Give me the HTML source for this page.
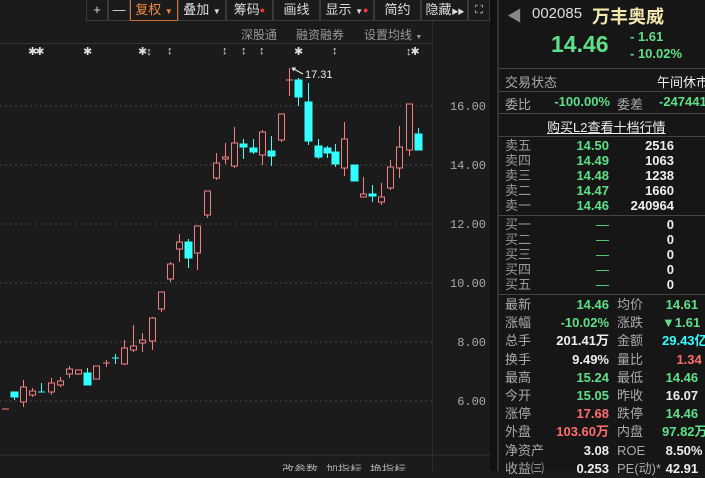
<!DOCTYPE html>
<html><head><meta charset="utf-8"><style>
*{margin:0;padding:0;box-sizing:border-box}
body{width:705px;height:471px;background:#1b1b1b;overflow:hidden;position:relative;font-family:"Liberation Sans","Noto Sans CJK SC",sans-serif;color:#ccc}
.a{position:absolute;white-space:nowrap}
.tb{position:absolute;top:0;height:21px;border:1px solid #3a3a3a;border-top:none;background:#1b1b1b;color:#ddd;font-size:13px;line-height:20px;text-align:center;white-space:nowrap;overflow:hidden}
.rp{position:absolute;left:497px;top:0;width:208px;height:471px;background:#161616;border-left:2px solid #333}
.l{position:absolute;font-size:13px;color:#aaa;left:6px}
.g{color:#5ee08a}.r{color:#ff6e6e}.w{color:#eee}.c{color:#3ff}
.v{position:absolute;font-size:13px;font-weight:bold;text-align:right}
.hl{position:absolute;left:0;width:208px;height:1px;background:#444}
</style></head><body>
<div class="a" style="left:0;top:43px;width:432px;height:1px;background:#333"></div>
<div class="a" style="left:432px;top:20px;width:1px;height:451px;background:#2e2e2e"></div>
<div class="a" style="left:490px;top:0;width:7px;height:471px;background:#111"></div>
<div class="tb" style="left:86px;width:22px">+</div>
<div class="tb" style="left:108px;width:22px">—</div>
<div class="tb" style="left:130px;width:48px;color:#f08a3c;border:1px solid #d07030;border-top:none">复权 <span style="font-size:8px">▼</span></div>
<div class="tb" style="left:178px;width:48px">叠加 <span style="font-size:8px">▼</span></div>
<div class="tb" style="left:226px;width:47px">筹码<span style="color:#f33;font-size:9px;vertical-align:top">●</span></div>
<div class="tb" style="left:273px;width:47px">画线</div>
<div class="tb" style="left:320px;width:54px">显示 <span style="font-size:8px">▼</span><span style="color:#f33;font-size:9px;vertical-align:top">●</span></div>
<div class="tb" style="left:374px;width:47px">简约</div>
<div class="tb" style="left:421px;width:47px">隐藏<span style="font-size:7px;letter-spacing:-1px">▶▶</span></div>
<div class="tb" style="left:468px;width:22px;font-size:11px">⛶</div>
<div class="a" style="left:241px;top:26px;font-size:12px;color:#999">深股通</div>
<div class="a" style="left:296px;top:26px;font-size:12px;color:#999">融资融券</div>
<div class="a" style="left:364px;top:26px;font-size:12px;color:#999">设置均线 <span style="font-size:7px">▼</span></div>
<div class="a" style="left:28px;top:45px;font-size:11px;color:#ddd;letter-spacing:-2px">✱✱</div>
<div class="a" style="left:83px;top:45px;font-size:11px;color:#ddd">✱</div>
<div class="a" style="left:138px;top:45px;font-size:11px;color:#ddd;letter-spacing:-1px">✱↕</div>
<div class="a" style="left:167px;top:45px;font-size:11px;color:#ddd">↕</div>
<div class="a" style="left:222px;top:45px;font-size:11px;color:#ddd">↕</div>
<div class="a" style="left:241px;top:45px;font-size:11px;color:#ddd">↕</div>
<div class="a" style="left:259px;top:45px;font-size:11px;color:#ddd">↕</div>
<div class="a" style="left:294px;top:45px;font-size:11px;color:#ddd">✱</div>
<div class="a" style="left:332px;top:45px;font-size:11px;color:#ddd">↕</div>
<div class="a" style="left:406px;top:45px;font-size:11px;color:#ddd;letter-spacing:-1px">↕✱</div>
<svg class="a" style="left:0;top:0" width="490" height="471">
<g stroke="#444" stroke-dasharray="2,3">
<line x1="0" y1="106" x2="432" y2="106"/><line x1="0" y1="165" x2="432" y2="165"/><line x1="0" y1="224" x2="432" y2="224"/><line x1="0" y1="283" x2="432" y2="283"/><line x1="0" y1="342" x2="432" y2="342"/><line x1="0" y1="401" x2="432" y2="401"/>
</g>
<line x1="0" y1="455" x2="490" y2="455" stroke="#333"/>
<g font-family="Liberation Mono,monospace" font-size="12" fill="#aaa" text-anchor="end">
<text x="486" y="110">16.00</text><text x="486" y="169">14.00</text><text x="486" y="228">12.00</text><text x="486" y="287">10.00</text><text x="486" y="346">8.00</text><text x="486" y="405">6.00</text></g>
<g stroke="#f08080" fill="#1b1b1b" stroke-width="1">
<line x1="2" y1="409" x2="9" y2="409"/>
<line x1="23.5" y1="380" x2="23.5" y2="407"/><rect x="20.5" y="387" width="6" height="15"/>
<line x1="32.5" y1="388" x2="32.5" y2="397"/><rect x="29.5" y="391" width="6" height="4"/>
<line x1="51.5" y1="378" x2="51.5" y2="395"/><rect x="48.5" y="383" width="6" height="9"/>
<line x1="60.5" y1="377" x2="60.5" y2="387"/><rect x="57.5" y="381" width="6" height="4"/>
<line x1="69.5" y1="366" x2="69.5" y2="378"/><rect x="66.5" y="369" width="6" height="5"/>
<line x1="78.5" y1="370" x2="78.5" y2="375"/><rect x="75.5" y="370" width="6" height="4"/>
<rect x="93.5" y="366" width="6" height="13"/>
<line x1="106.5" y1="360" x2="106.5" y2="367"/><line x1="103" y1="363" x2="110" y2="363"/>
<line x1="124.5" y1="340" x2="124.5" y2="365"/><rect x="121.5" y="348" width="6" height="16"/>
<line x1="133.5" y1="325" x2="133.5" y2="352"/><rect x="130.5" y="346" width="6" height="4"/>
<line x1="142.5" y1="333" x2="142.5" y2="352"/><rect x="139.5" y="340" width="6" height="3"/>
<line x1="152.5" y1="317" x2="152.5" y2="350"/><rect x="149.5" y="318" width="6" height="23"/>
<line x1="161.5" y1="292" x2="161.5" y2="312"/><rect x="158.5" y="292" width="6" height="17"/>
<line x1="170.5" y1="262" x2="170.5" y2="282"/><rect x="167.5" y="264" width="6" height="15"/>
<line x1="179.5" y1="234" x2="179.5" y2="262"/><rect x="176.5" y="242" width="6" height="7"/>
<line x1="197.5" y1="226" x2="197.5" y2="270"/><rect x="194.5" y="226" width="6" height="27"/>
<line x1="207.5" y1="191" x2="207.5" y2="218"/><rect x="204.5" y="191" width="6" height="24"/>
<line x1="216.5" y1="153" x2="216.5" y2="180"/><rect x="213.5" y="163" width="6" height="15"/>
<line x1="225.5" y1="143" x2="225.5" y2="164"/><rect x="222.5" y="157" width="6" height="2"/>
<line x1="234.5" y1="127" x2="234.5" y2="168"/><rect x="231.5" y="143" width="6" height="23"/>
<line x1="262.5" y1="130" x2="262.5" y2="165"/><rect x="259.5" y="132" width="6" height="23"/>
<line x1="281.5" y1="114" x2="281.5" y2="142"/><rect x="278.5" y="114" width="6" height="26"/>
<line x1="289.5" y1="68" x2="289.5" y2="96"/><line x1="286" y1="80" x2="293" y2="80"/>
<line x1="344.5" y1="122" x2="344.5" y2="176"/><rect x="341.5" y="139" width="6" height="29"/>
<line x1="363.5" y1="177" x2="363.5" y2="197"/><rect x="360.5" y="194" width="6" height="3"/>
<line x1="381.5" y1="183" x2="381.5" y2="205"/><rect x="378.5" y="197" width="6" height="5"/>
<line x1="390.5" y1="160" x2="390.5" y2="190"/><rect x="387.5" y="167" width="6" height="21"/>
<line x1="399.5" y1="126" x2="399.5" y2="178"/><rect x="396.5" y="147" width="6" height="21"/>
<line x1="409.5" y1="104" x2="409.5" y2="156"/><rect x="406.5" y="104" width="6" height="46"/>
</g>
<g stroke="#3ff" fill="#3ff">
<line x1="14.5" y1="392" x2="14.5" y2="400"/><rect x="11" y="392" width="7" height="5"/>
<line x1="41.5" y1="383" x2="41.5" y2="392"/><line x1="38" y1="392" x2="45" y2="392"/>
<line x1="87.5" y1="368" x2="87.5" y2="385"/><rect x="84" y="373" width="7" height="12"/>
<line x1="115.5" y1="354" x2="115.5" y2="364"/><line x1="112" y1="358" x2="119" y2="358"/>
<line x1="188.5" y1="239" x2="188.5" y2="268"/><rect x="185" y="242" width="7" height="16"/>
<line x1="243.5" y1="139" x2="243.5" y2="159"/><rect x="240" y="144" width="7" height="3"/>
<line x1="253.5" y1="139" x2="253.5" y2="154"/><rect x="250" y="148" width="7" height="4"/>
<line x1="271.5" y1="136" x2="271.5" y2="166"/><rect x="268" y="151" width="7" height="5"/>
<line x1="298.5" y1="78" x2="298.5" y2="106"/><rect x="295" y="80" width="7" height="17"/>
<line x1="308.5" y1="83" x2="308.5" y2="145"/><rect x="305" y="102" width="7" height="39"/>
<line x1="318.5" y1="139" x2="318.5" y2="159"/><rect x="315" y="146" width="7" height="11"/>
<line x1="327.5" y1="146" x2="327.5" y2="158"/><rect x="324" y="148" width="7" height="5"/>
<line x1="335.5" y1="144" x2="335.5" y2="167"/><rect x="332" y="152" width="7" height="12"/>
<rect x="351" y="165" width="7" height="16"/>
<line x1="372.5" y1="185" x2="372.5" y2="202"/><rect x="369" y="194" width="7" height="2"/>
<line x1="418.5" y1="128" x2="418.5" y2="150"/><rect x="415" y="134" width="7" height="16"/>
</g>
<path d="M292 68 L303 74 M292 68 l4 0 M292 68 l2 3" stroke="#eee" fill="none"/>
<text x="305" y="78" font-size="11" fill="#eee" font-family="Liberation Sans,sans-serif">17.31</text>
<g font-size="12" fill="#aaa" font-family="Liberation Sans,Noto Sans CJK SC,sans-serif"><text x="282" y="474">改参数</text><text x="326" y="474">加指标</text><text x="370" y="474">换指标</text></g>
</svg>
<div class="rp">
<div class="a" style="left:8px;top:5px;font-size:15px;color:#888">◀</div>
<div class="a" style="left:33px;top:5px;font-size:15px;color:#ddd">002085</div>
<div class="a" style="left:93px;top:3px;font-size:18px;font-weight:bold;color:#f4e8b0">万丰奥威</div>
<div class="a g" style="left:52px;top:31px;font-size:23px;font-weight:bold">14.46</div>
<div class="a g" style="left:131px;top:29px;font-size:13px;font-weight:bold">- 1.61</div>
<div class="a g" style="left:131px;top:46px;font-size:13px;font-weight:bold">- 10.02%</div>
<div class="hl" style="top:68px"></div>
<div class="l" style="top:72px">交易状态</div><div class="a w" style="left:158px;top:72px;font-size:13px">午间休市</div>
<div class="hl" style="top:91px"></div>
<div class="l" style="top:94px">委比</div><div class="v g" style="left:40px;width:71px;top:94px">-100.00%</div>
<div class="a" style="left:118px;top:94px;font-size:13px;color:#aaa">委差</div><div class="a g" style="left:160px;top:94px;font-size:13px;font-weight:bold">-247441</div>
<div class="hl" style="top:113px"></div>
<div class="a w" style="left:48px;top:117px;font-size:13px;text-decoration:underline">购买L2查看十档行情</div>
<div class="hl" style="top:136px"></div>
<div style="position:absolute;top:138px;left:0;width:208px;line-height:15px;font-size:13px">
<div class="l" style="position:static;padding-left:6px;color:#999">卖五<br>卖四<br>卖三<br>卖二<br>卖一</div>
<div class="v g" style="top:0;left:40px;width:70px;line-height:15px">14.50<br>14.49<br>14.48<br>14.47<br>14.46</div>
<div class="v w" style="top:0;left:110px;width:65px;line-height:15px">2516<br>1063<br>1238<br>1660<br>240964</div>
</div>
<div class="hl" style="top:215px"></div>
<div style="position:absolute;top:217px;left:0;width:208px;line-height:15px;font-size:13px">
<div class="l" style="position:static;padding-left:6px;color:#999">买一<br>买二<br>买三<br>买四<br>买五</div>
<div class="v g" style="top:0;left:40px;width:70px;line-height:15px;font-weight:normal">—<br>—<br>—<br>—<br>—</div>
<div class="v w" style="top:0;left:110px;width:65px;line-height:15px">0<br>0<br>0<br>0<br>0</div>
</div>
<div class="hl" style="top:294px"></div>
<div style="position:absolute;top:296px;left:0;width:230px;line-height:18.2px;font-size:13px">
<div class="l" style="position:static;padding-left:6px">最新<br>涨幅<br>总手<br>换手<br>最高<br>今开<br>涨停<br>外盘<br>净资产<br>收益㈢</div>
<div class="v" style="top:0;left:30px;width:80px;line-height:18.2px"><span class="g">14.46</span><br><span class="g">-10.02%</span><br><span class="w">201.41万</span><br><span class="w">9.49%</span><br><span class="g">15.24</span><br><span class="g">15.05</span><br><span class="r">17.68</span><br><span class="r">103.60万</span><br><span class="w">3.08</span><br><span class="w">0.253</span></div>
<div class="a" style="top:0;left:118px;line-height:18.2px;color:#aaa">均价<br>涨跌<br>金额<br>量比<br>最低<br>昨收<br>跌停<br>内盘<br>ROE<br>PE(动)*</div>
<div class="a" style="top:0;left:163px;line-height:18.2px;font-weight:bold"><span class="g">&nbsp;14.61</span><br><span class="g">▼1.61</span><br><span class="c">29.43亿</span><br><span class="r">&nbsp;&nbsp;&nbsp;&nbsp;1.34</span><br><span class="g">&nbsp;14.46</span><br><span class="w">&nbsp;16.07</span><br><span class="g">&nbsp;14.46</span><br><span class="g">97.82万</span><br><span class="w">&nbsp;8.50%</span><br><span class="w">&nbsp;42.91</span></div>
</div>
</div>
</body></html>
